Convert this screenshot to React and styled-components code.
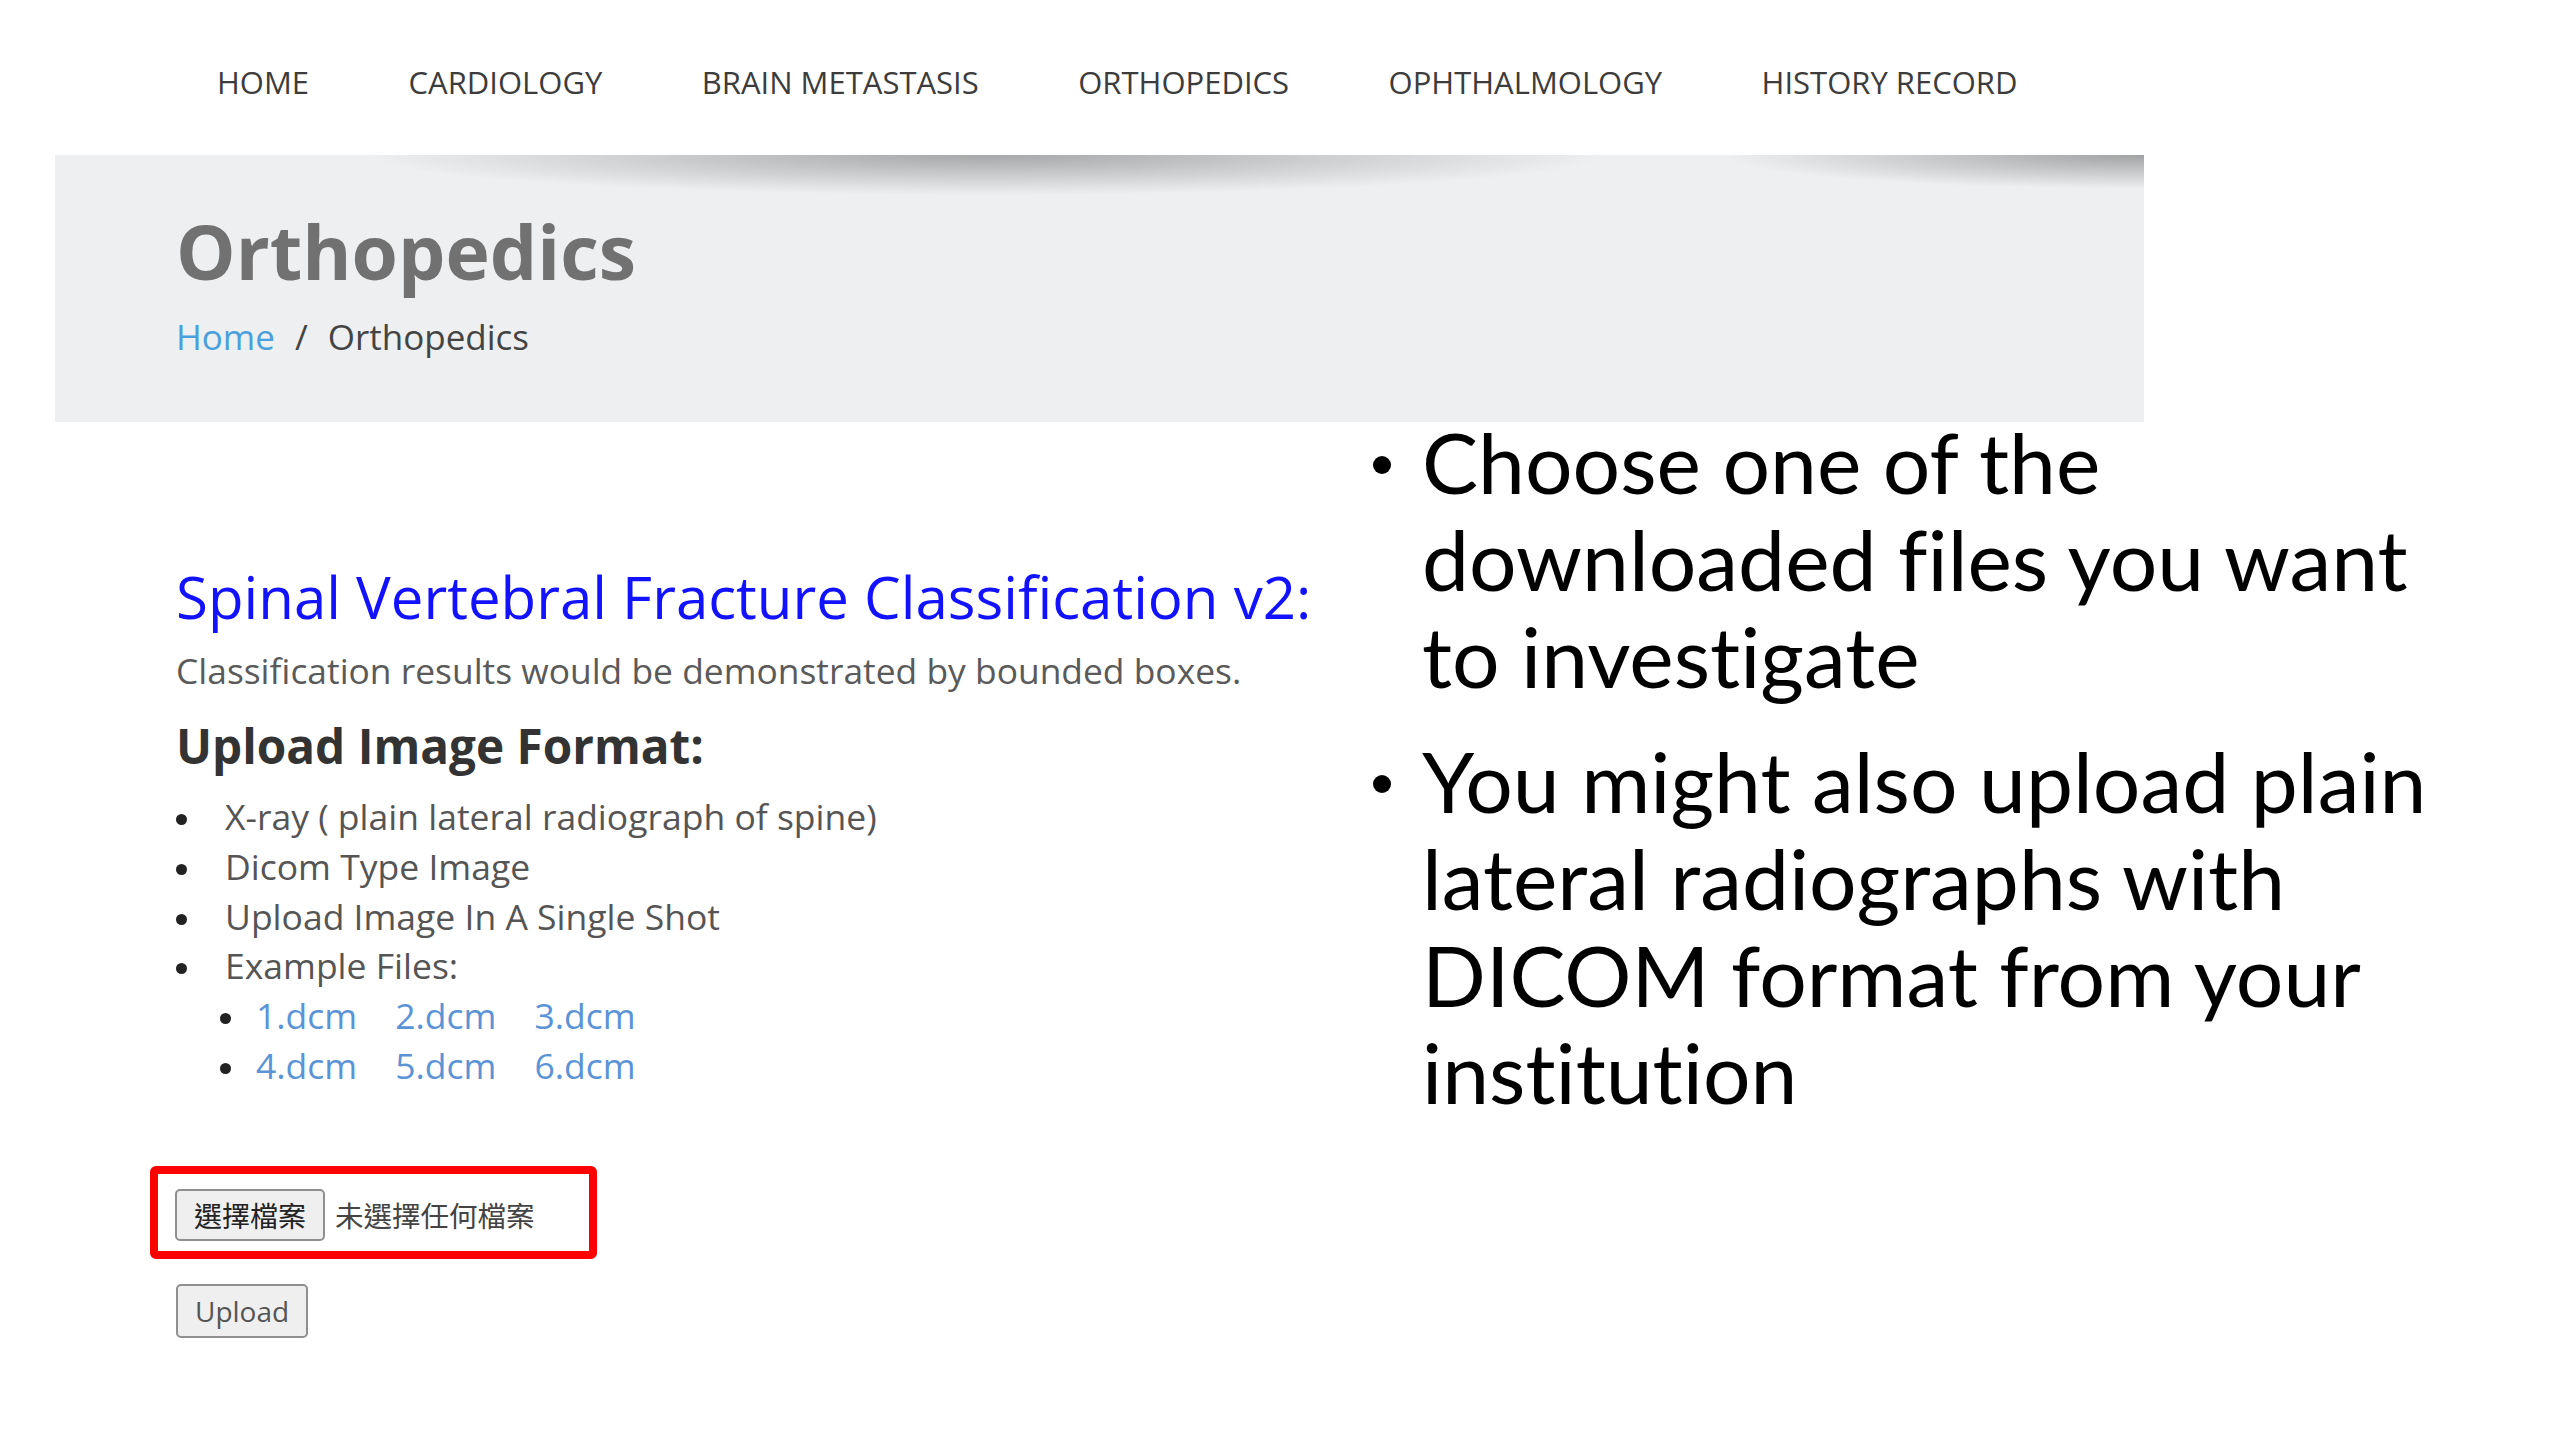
import React from 'react'
import styled, { createGlobalStyle } from 'styled-components'

const GlobalStyle = createGlobalStyle`
  html, body {
    margin: 0;
    padding: 0;
    background: #ffffff;
  }
  body {
    font-family: "Open Sans", "Noto Sans", sans-serif;
  }
`

const NAV_ITEMS = ['Home', 'Cardiology', 'Brain Metastasis', 'Orthopedics', 'Ophthalmology', 'History Record']
const FORMATS = ['X-ray ( plain lateral radiograph of spine)', 'Dicom Type Image', 'Upload Image In A Single Shot']
const EXAMPLE_ROWS = [['1.dcm', '2.dcm', '3.dcm'], ['4.dcm', '5.dcm', '6.dcm']]

const Slide = styled.div`
  width: 2560px;
  height: 1440px;
  overflow: hidden;
  background: #ffffff;
`

const Nav = styled.nav`
  display: flex;
  gap: 99.5px;
  height: 155px;
  box-sizing: border-box;
  padding: 62px 0 0 217px;
`

const NavLink = styled.a`
  font-size: 31px;
  line-height: 40px;
  color: #3c3c3c;
  text-transform: uppercase;
  text-decoration: none;
`

// grey page header with the curled paper shadow along its top edge
const Banner = styled.header`
  margin-left: 55px;
  width: 2089px;
  height: 267px;
  box-sizing: border-box;
  padding: 51px 0 0 121px;
  background:
    radial-gradient(ellipse 620px 40px at 930px 0, rgba(0, 0, 0, 0.3), rgba(0, 0, 0, 0) 100%),
    radial-gradient(ellipse 420px 34px at 2089px 0, rgba(0, 0, 0, 0.32), rgba(0, 0, 0, 0) 100%),
    #edeff0;
`

const PageTitle = styled.h1`
  margin: 0;
  font-size: 75px;
  line-height: 1.2;
  font-weight: 700;
  color: #717171;
`

const Crumbs = styled.div`
  margin-top: 15px;
  font-size: 35px;
  line-height: 1.5;
  color: #444;
  a {
    color: #4aa0dc;
    text-decoration: none;
  }
  span {
    margin: 0 20px;
  }
`

const Row = styled.div`
  display: flex;
`

const Main = styled.main`
  width: 1373px;
  box-sizing: border-box;
  padding-left: 176px;
`

const ToolTitle = styled.h2`
  margin: 140px 0 0;
  font-size: 58.2px;
  line-height: 1.2;
  font-weight: 400;
  color: #1212ff;
`

const Lead = styled.p`
  margin: 12px 0 0;
  font-size: 35.4px;
  line-height: 1.5;
  color: #5a5a5a;
`

const SubTitle = styled.h3`
  margin: 20px 0 0;
  font-size: 47.7px;
  line-height: 1.2;
  font-weight: 700;
  color: #333;
`

const List = styled.ul`
  margin: ${p => (p.$nested ? '0 0 0 -49px' : '18px 0 0')};
  padding: 0 0 0 ${p => (p.$nested ? '44px' : '0')};
  list-style: none;
`

const Item = styled.li`
  display: flex;
  align-items: flex-start;
  gap: ${p => (p.$nested ? '25px' : '38px')};
  font-size: 35.5px;
  line-height: 49.7px;
  color: #555;
`

const ItemBody = styled.div`
  flex: 1;
`

const Dot = styled.span`
  flex: none;
  width: 11px;
  height: 11px;
  margin-top: 22px;
  border-radius: 50%;
  background: #222;
`

const FileLinks = styled.div`
  display: flex;
  gap: 38px;
  a {
    color: #5a94d6;
    text-decoration: none;
  }
`

const Highlight = styled.div`
  display: flex;
  align-items: flex-start;
  gap: 10px;
  width: 447px;
  height: 93px;
  box-sizing: border-box;
  margin: 76px 0 0 -26px;
  padding: 15px 0 0 17px;
  border: 8px solid #ff0000;
  border-radius: 6px;
`

const NativeButton = styled.button`
  height: ${p => p.$h}px;
  padding: 0 ${p => p.$pad}px;
  border: 2px solid #8f8f8f;
  border-radius: 5px;
  background: #efefef;
  color: ${p => p.$color};
  font-family: ${p => p.$cjk ? '"Noto Sans CJK TC", sans-serif' : '"Open Sans", sans-serif'};
  font-size: 28px;
  line-height: 1;
`

const NoFile = styled.span`
  font-family: "Noto Sans CJK TC", sans-serif;
  font-size: 28.5px;
  line-height: 52px;
  color: #444;
`

const UploadRow = styled.div`
  margin-top: 25px;
`

const Notes = styled.ul`
  flex: 1;
  margin: -9px 0 0;
  padding: 0;
  list-style: none;
`

const Note = styled.li`
  display: flex;
  gap: 31px;
  margin-top: ${p => (p.$first ? '0' : '28px')};
  font-family: Lato, "Open Sans", sans-serif;
  font-size: 84px;
  line-height: 97px;
  color: #000;
  font-variant-ligatures: none;
`

const NoteDot = styled.span`
  flex: none;
  width: 18px;
  height: 18px;
  margin-top: 43px;
  border-radius: 50%;
  background: #000;
`

export default function App() {
  return (
    <Slide>
      <GlobalStyle />
      <Nav>
        {NAV_ITEMS.map(label => (
          <NavLink key={label} href="#">{label}</NavLink>
        ))}
      </Nav>
      <Banner>
        <PageTitle>Orthopedics</PageTitle>
        <Crumbs>
          <a href="#">Home</a>
          <span>/</span>
          Orthopedics
        </Crumbs>
      </Banner>
      <Row>
        <Main>
          <ToolTitle>Spinal Vertebral Fracture Classification v2:</ToolTitle>
          <Lead>Classification results would be demonstrated by bounded boxes.</Lead>
          <SubTitle>Upload Image Format:</SubTitle>
          <List>
            {FORMATS.map(text => (
              <Item key={text}>
                <Dot />
                <ItemBody>{text}</ItemBody>
              </Item>
            ))}
            <Item>
              <Dot />
              <ItemBody>
                Example Files:
                <List $nested>
                  {EXAMPLE_ROWS.map(row => (
                    <Item key={row[0]} $nested>
                      <Dot />
                      <FileLinks>
                        {row.map(f => (
                          <a key={f} href="#">{f}</a>
                        ))}
                      </FileLinks>
                    </Item>
                  ))}
                </List>
              </ItemBody>
            </Item>
          </List>
          <Highlight>
            <NativeButton $cjk $h={52} $pad={17} $color="#222">選擇檔案</NativeButton>
            <NoFile>未選擇任何檔案</NoFile>
          </Highlight>
          <UploadRow>
            <NativeButton $h={54} $pad={17} $color="#555">Upload</NativeButton>
          </UploadRow>
        </Main>
        <Notes>
          <Note $first>
            <NoteDot />
            <span>Choose one of the<br />downloaded files you want<br />to investigate</span>
          </Note>
          <Note>
            <NoteDot />
            <span>You might also upload plain<br />lateral radiographs with<br />DICOM format from your<br />institution</span>
          </Note>
        </Notes>
      </Row>
    </Slide>
  )
}
